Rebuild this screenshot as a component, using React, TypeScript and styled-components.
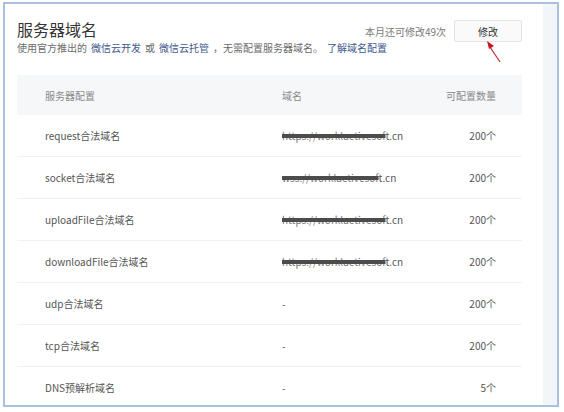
import styled, { createGlobalStyle } from 'styled-components';

const GlobalStyle = createGlobalStyle`
  html, body {
    margin: 0;
    padding: 0;
    background: #ffffff;
  }
  body {
    font-family: 'Noto Sans CJK SC', 'Noto Sans', sans-serif;
  }
  * {
    box-sizing: border-box;
  }
`;

const Frame = styled.div`
  position: relative;
  margin: 2px 0 0 3px;
  width: 556px;
  height: 405px;
  border: 2px solid #a9c0de;
  display: flex;
  overflow: hidden;
`;

const Main = styled.div`
  flex: 1;
  min-width: 0;
  background: #ffffff;
  padding: 14px 21px 0 12px;
`;

const SideStrip = styled.div`
  width: 14px;
  background: #f3f6f8;
`;

const Head = styled.div`
  display: flex;
  justify-content: space-between;
  align-items: flex-start;
`;

const Intro = styled.div`
  flex: 1;
  min-width: 0;
  white-space: nowrap;
`;

const Title = styled.h2`
  margin: 0;
  font-size: 16px;
  line-height: 22px;
  font-weight: 400;
  color: #353535;
`;

const Desc = styled.p`
  margin: 1px 0 0;
  font-size: 10px;
  line-height: 14px;
  color: #6b6b6b;
`;

const Link = styled.a`
  color: #40598c;
  text-decoration: none;
  margin: 0 4px;
`;

const Quota = styled.div`
  display: flex;
  align-items: center;
  gap: 8px;
  padding-top: 2px;
  font-size: 10px;
  color: #7a7a7a;
  white-space: nowrap;
`;

const Button = styled.button`
  width: 68px;
  height: 22px;
  border: 1px solid #e2e4e8;
  border-radius: 2px;
  background: #fafafa;
  font-family: inherit;
  font-size: 10px;
  color: #333333;
  padding: 0;
`;

const Table = styled.div`
  margin-top: 20px;
`;

const Row = styled.div<{ $header?: boolean }>`
  display: grid;
  grid-template-columns: 237px 1fr auto;
  align-items: center;
  height: ${(p) => (p.$header ? '40px' : '42px')};
  padding: 0 26px 0 28px;
  font-size: 10px;
  color: ${(p) => (p.$header ? '#8a8a8a' : '#555555')};
  background: ${(p) => (p.$header ? '#f5f7f9' : 'transparent')};
  border-bottom: ${(p) => (p.$header ? 'none' : '1px solid #eff1f3')};
`;

const Count = styled.span`
  text-align: right;
`;

const Redacted = styled.span`
  color: #777777;
  text-decoration: line-through;
  text-decoration-thickness: 4px;
  text-decoration-color: #4c4c4c;
`;

const Arrow = styled.svg`
  position: absolute;
  left: 476px;
  top: 34px;
`;

const rows = [
  { name: 'request合法域名', prefix: 'https://worklaetivesof', suffix: 't.cn', count: '200个' },
  { name: 'socket合法域名', prefix: 'wss://worklaetivesof', suffix: 't.cn', count: '200个' },
  { name: 'uploadFile合法域名', prefix: 'https://worklaetivesof', suffix: 't.cn', count: '200个' },
  { name: 'downloadFile合法域名', prefix: 'https://worklaetivesof', suffix: 't.cn', count: '200个' },
  { name: 'udp合法域名', prefix: '', suffix: '-', count: '200个' },
  { name: 'tcp合法域名', prefix: '', suffix: '-', count: '200个' },
  { name: 'DNS预解析域名', prefix: '', suffix: '-', count: '5个' },
];

export default function App() {
  return (
    <>
      <GlobalStyle />
      <Frame>
        <Main>
          <Head>
            <Intro>
              <Title>服务器域名</Title>
              <Desc>
                使用官方推出的<Link>微信云开发</Link>或<Link>微信云托管</Link>，无需配置服务器域名。
                <Link>了解域名配置</Link>
              </Desc>
            </Intro>
            <Quota>
              <span>本月还可修改49次</span>
              <Button>修改</Button>
            </Quota>
          </Head>
          <Table>
            <Row $header>
              <span>服务器配置</span>
              <span>域名</span>
              <Count>可配置数量</Count>
            </Row>
            {rows.map((r) => (
              <Row key={r.name}>
                <span>{r.name}</span>
                <span>
                  {r.prefix && <Redacted>{r.prefix}</Redacted>}
                  {r.suffix}
                </span>
                <Count>{r.count}</Count>
              </Row>
            ))}
          </Table>
        </Main>
        <SideStrip />
        <Arrow width="30" height="30" viewBox="0 0 30 30">
          <line x1="19" y1="24" x2="9" y2="9" stroke="#c0282c" strokeWidth="1.2" />
          <polygon points="6,3 13,8 8,11" fill="#c8141a" />
        </Arrow>
      </Frame>
    </>
  );
}
